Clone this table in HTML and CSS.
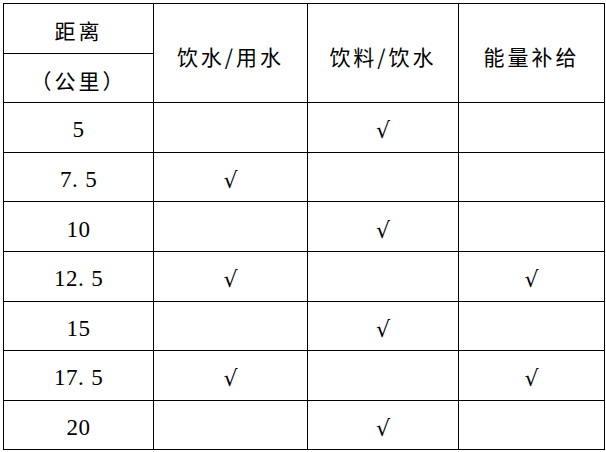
FILE: index.html
```html
<!DOCTYPE html>
<html lang="zh">
<head>
<meta charset="utf-8">
<link rel="stylesheet" href="styles.css">
</head>
<body>
<table class="supply">
  <colgroup>
    <col class="c1"><col class="c2"><col class="c3"><col class="c4">
  </colgroup>
  <tr class="head-a">
    <th class="cjk">距离</th>
    <th class="cjk" rowspan="2">饮水/用水</th>
    <th class="cjk" rowspan="2">饮料/饮水</th>
    <th class="cjk" rowspan="2">能量补给</th>
  </tr>
  <tr class="head-b">
    <th class="cjk paren">（公里）</th>
  </tr>
  <tr><td class="num">5</td><td></td><td class="ck">√</td><td></td></tr>
  <tr><td class="num">7<span class="dot">.</span>5</td><td class="ck">√</td><td></td><td></td></tr>
  <tr><td class="num">10</td><td></td><td class="ck">√</td><td></td></tr>
  <tr><td class="num">12<span class="dot">.</span>5</td><td class="ck">√</td><td></td><td class="ck">√</td></tr>
  <tr><td class="num">15</td><td></td><td class="ck">√</td><td></td></tr>
  <tr><td class="num">17<span class="dot">.</span>5</td><td class="ck">√</td><td></td><td class="ck">√</td></tr>
  <tr><td class="num">20</td><td></td><td class="ck">√</td><td></td></tr>
</table>
</body>
</html>
```
FILE: styles.css
```css
html, body {
  margin: 0;
  padding: 0;
  background: #fff;
}
body {
  padding: 3px 0 0 3px;
}
.supply {
  border-collapse: collapse;
  table-layout: fixed;
  width: 601px;
  color: #000;
}
.c1 { width: 150px; }
.c2 { width: 154px; }
.c3 { width: 151px; }
.c4 { width: 146px; }
.supply th,
.supply td {
  border: 1.5px solid #000;
  padding: 0;
  text-align: center;
  vertical-align: middle;
  font-weight: normal;
}
.supply tr { height: 49.6px; }
.head-a { height: 49px; }
.head-b { height: 50px; }
.cjk {
  font-family: "Noto Sans CJK SC", sans-serif;
  font-weight: 300;
  font-size: 21px;
  letter-spacing: 3px;
  padding-top: 7px !important;
  line-height: 1;
}
.head-a th.cjk:first-child { padding-top: 4px !important; }
.paren {
  letter-spacing: 3px;
  font-variant-east-asian: full-width;
  padding-top: 5px !important;
}
.num {
  font-family: "Liberation Serif", serif;
  font-size: 23px;
  letter-spacing: 0.5px;
  padding-top: 6px !important;
}
.dot { margin-right: 7px; }
.ck {
  font-family: "DejaVu Sans", sans-serif;
  font-size: 22px;
  padding-top: 7px !important;
}
```
